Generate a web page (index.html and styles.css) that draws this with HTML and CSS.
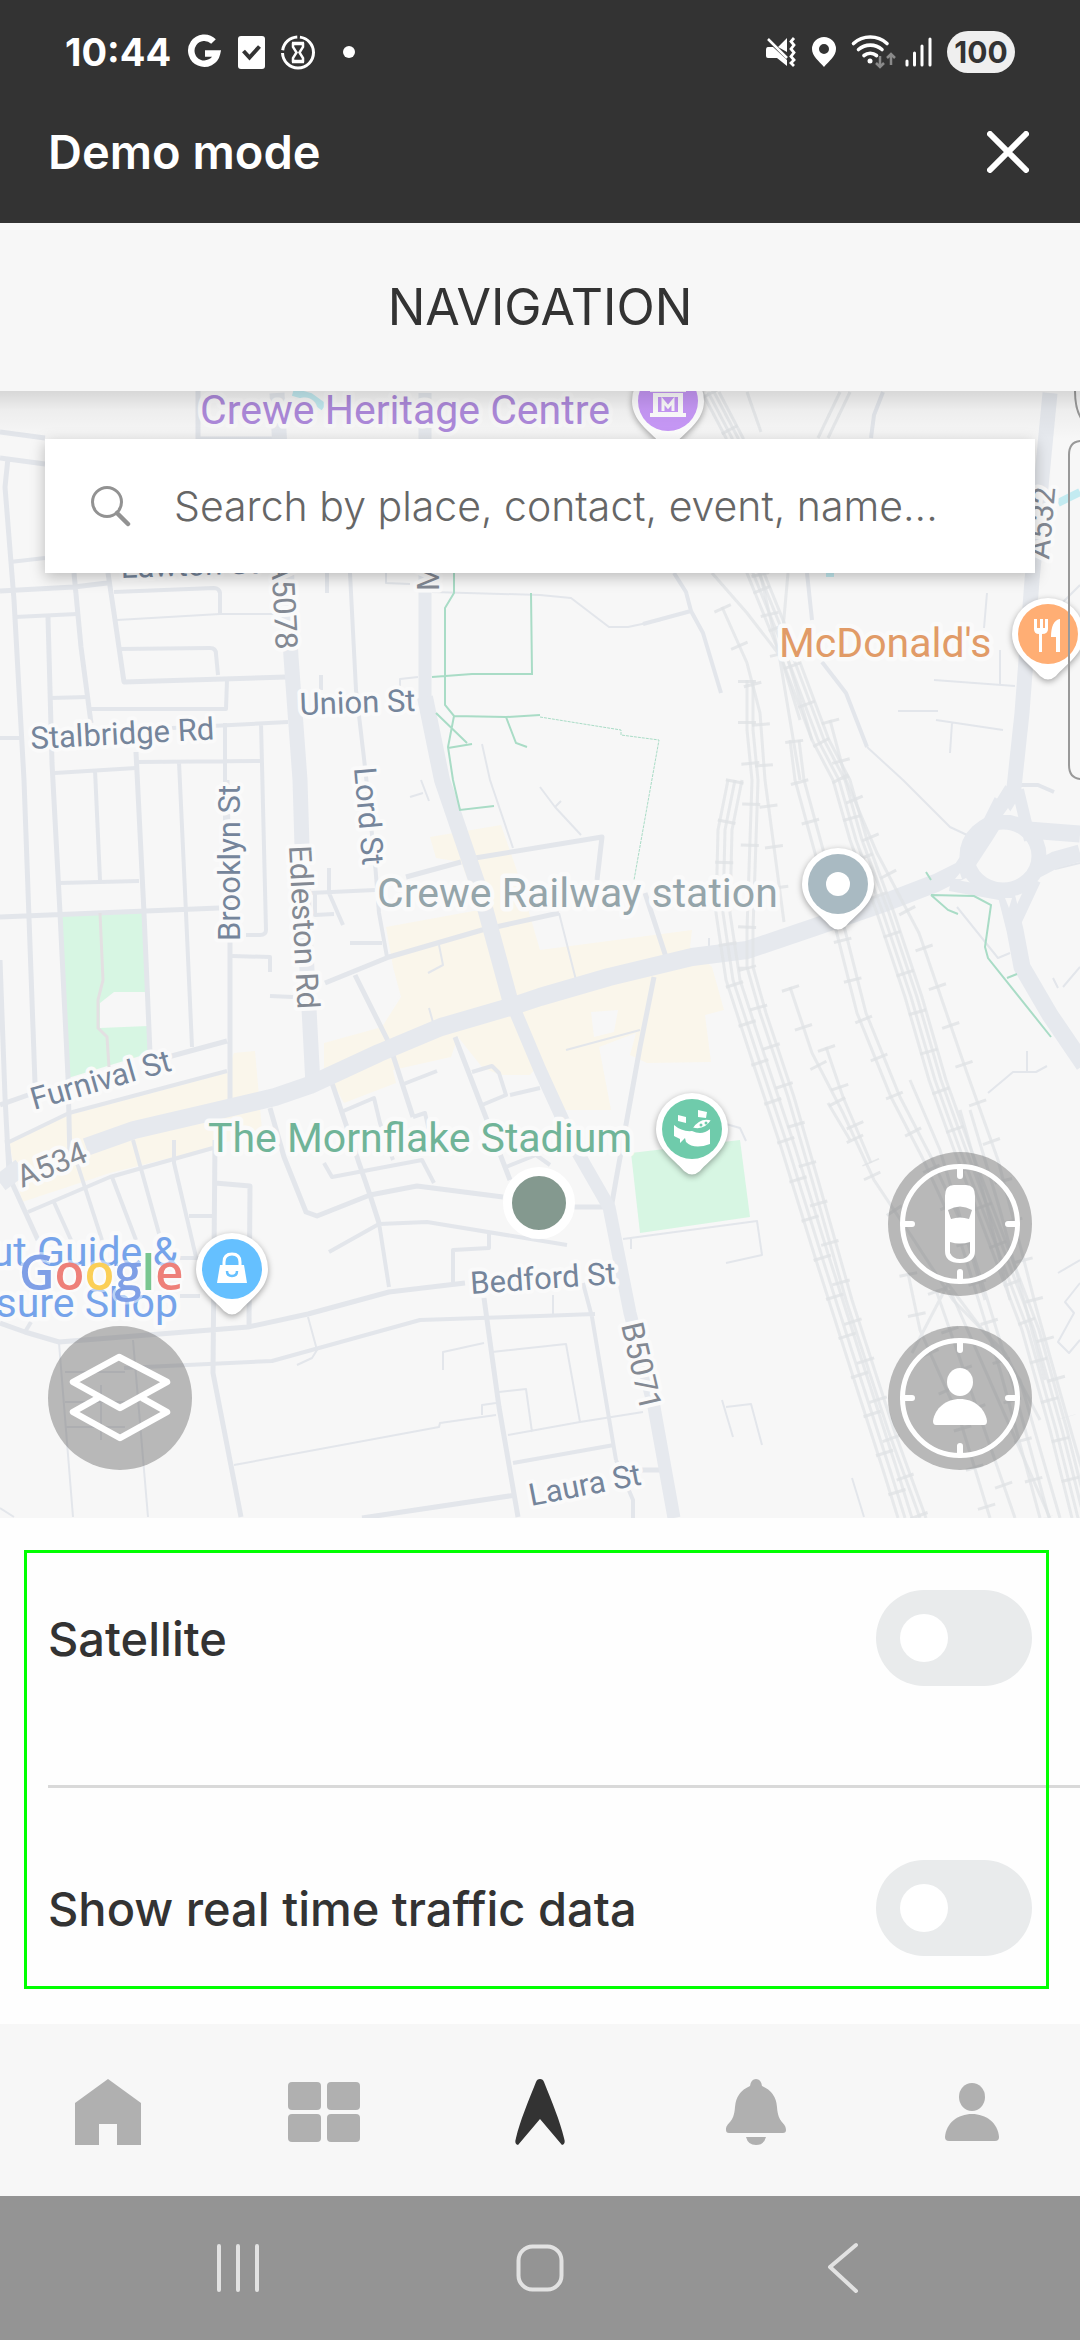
FILE: index.html
```html
<!DOCTYPE html>
<html lang="en">
<head>
<meta charset="utf-8">
<meta name="viewport" content="width=device-width, initial-scale=1">
<title>Navigation</title>
<link rel="stylesheet" href="styles.css">
</head>
<body>
<header class="top">
  <div class="status">
    <time class="clock">10:44</time>
    <svg class="status-left" viewBox="188 30 170 44" aria-hidden="true">
      <path d="M213.500 41.500A13 13 0 1 0 217 53.500H205" fill="none" stroke="#fff" stroke-width="6.500"/>
      <rect x="238" y="36" width="27" height="33" rx="3" fill="#fff"/>
      <path d="M243.500 51l6 6.500 10-11" fill="none" stroke="#333" stroke-width="4"/>
      <circle cx="298" cy="52.500" r="15.500" fill="none" stroke="#fff" stroke-width="3" stroke-dasharray="70 3 21 3.400" stroke-dashoffset="-2" transform="rotate(-90 298 52.500)"/>
      <path d="M293 44h10v3l-3.500 5.500 3.500 5.500v3h-10v-3l3.500-5.500-3.500-5.500z" fill="none" stroke="#fff" stroke-width="2.500"/>
      <path d="M292 43h12M292 62h12" stroke="#fff" stroke-width="2.500"/>
      <circle cx="349" cy="52" r="6" fill="#fff"/>
    </svg>
    <svg class="status-right" viewBox="764 30 170 44" aria-hidden="true">
      <path d="M778 47l9-9v14zM768 47h5l14 13v6l-10-8h-9q-2 0-2-2v-6q0-3 2-3z" fill="#fff"/>
      <path d="M768 39l19 19" stroke="#fff" stroke-width="2.500"/>
      <path d="M794 38l-3 3.500 3 3.500-3 4 3 3.500-3 4 3 3.500-3 3 3 3" fill="none" stroke="#fff" stroke-width="2.800"/>
      <path d="M824 37a12 12 0 0 0-12 12c0 7 7 12 12 18 5-6 12-11 12-18a12 12 0 0 0-12-12zm0 7a5 5 0 1 1 0 10 5 5 0 0 1 0-10z" fill="#fff"/>
      <g fill="none" stroke="#fff" stroke-width="3.600" stroke-linecap="round">
        <path d="M853.500 43.500a25 25 0 0 1 33.500 0M858.500 49.500a18 18 0 0 1 23.500 0M864 55.500a10 10 0 0 1 12.500 0"/>
        <path d="M907 61v4M914.500 53v12M922 46v19M930 39v26" stroke-width="3"/>
      </g>
      <circle cx="870" cy="61" r="2.500" fill="#fff"/>
      <path d="M880 56v11m-4-4l4 4 4-4M891 65V54m-4 4l4-4 4 4" fill="none" stroke="#8a8a8a" stroke-width="2.500"/>
    </svg>
    <span class="battery">100</span>
  </div>
  <div class="demo">
    <span class="demo-title">Demo mode</span>
    <button class="close" type="button" aria-label="Close">
      <svg viewBox="0 0 42 42"><path d="M3 3l36 36M39 3L3 39" fill="none" stroke="#fff" stroke-width="6" stroke-linecap="round"/></svg>
    </button>
  </div>
</header>

<h1 class="page-title">NAVIGATION</h1>

<main class="map">
  <svg class="map-canvas" viewBox="0 391 1080 1127" preserveAspectRatio="xMidYMid slice" role="img" aria-label="Map of Crewe">
    <g class="commercial">
      <path d="M9 1143L69 1115 227 1073 234 1053 255 1051 262 1130 210 1148 110 1173 22 1202z"/>
      <path d="M324 1070V1043L382 1027 401 997 393 967 386 927 479 910 461 862 436 858 430 837 501 825 516 868 540 950 692 930 690 947 712 967 724 1010 705 1015 711 1062 647 1063 630 1055 636 1033 599 1047 611 1110 561 1110 540 1063 530 1075 500 1075 482 1067 458 1037 451 1057 393 1070 396 1083 344 1103 331 1080z"/>
    </g>
    <g fill="#f7f7f7"><path d="M591 1012l27-2-4 22-20 5zM358 978l28-12 14 30-20 30z"/></g>
    <path class="park" d="M59 916l84-4 3 80h-32l-14 11v25l48-2 2 27-82 25z"/>
    <path class="park" d="M631 1153l109-13 10 77-110 16z"/>
    <path d="M293 392l17 5 14 10M1058 503l22-11M826 573l8 0" fill="none" stroke="#c3ebf1" stroke-width="8"/>

    <g class="minor">
      <path class="w6" d="M0 432l45 6M0 458l45 6M8 458L5 487 14 600 24 780 35 1083M0 591L74 587 107 583M74 573L81 647 91 723M108 573L114 613 124 682 286 677M198 391v48h80M48 617L52 763 60 913 68 1077 70 1160M0 917L219 908M136 752L144 913 150 1053M227 780L230 943V1100M0 960L5 1097 9 1173M0 1105L28 1095M168 1057L227 1041"/>
      <path class="w4" d="M10 562l35-4M114 592L214 588Q219 588 220 593V615M119 649L210 648Q216 648 216 654L218 675M15 617L77 614M50 698L88 697M91 709H226L227 680M0 738H21M172 728L288 722M55 773L136 768M136 762L260 761M225 723V780 908M261 723L266 930Q266 935 260 935H246M179 762L186 913 192 1047M95 770L100 880M59 883L139 881M9 1142L69 1113 227 1071M327 573V593M321 675V690M232 956L270 957V972M270 996L293 997"/>
      <path class="w2" d="M117 620L220 614H275M386 573V583L410 584M400 690V679L418 677M432 592L540 595 571 598 609 627H628L661 620M482 744L490 780 513 848M410 797l13-4M421 780l8 21"/>
      <path class="w4" d="M350 573L356 690 365 767 375 863 379 913 387 957M310 893L375 890M315 893V915L334 914M329 868V893L343 925M350 943H382M643 624L691 611 703 633 721 693M691 611L686 592 674 573"/>
      <path class="w6" d="M325 983L389 957 482 930 559 913M406 877L461 862M475 858L602 837 597 880M355 975L389 1043 413 1117M645 893L666 957M654 977L640 1047 616 1180 612 1203 605 1208M270 1108L284 1157 306 1212 317 1216 370 1195 417 1186 503 1197M331 1080L358 1160 370 1195M455 1037L510 1180"/>
      <path class="w2" d="M540 787L555 807 581 835M555 807l6-6M559 913L576 980M566 1050L640 1030M709 938v15M439 945l4 20-15 8M429 1008l5 18"/>
      <path class="w4" d="M472 1072L492 1066 499 1073 506 1095 482 1105M510 1095L540 1088M401 1085L437 1071M341 1112L374 1098 380 1123 393 1160M324 1163L332 1177 422 1160 434 1183M506 1167l30-12 14 10M413 1117l12-4 9 40"/>
      <path class="w6" d="M7 1140L12 1183 38 1240M215 1140L213 1373 241 1517M215 1183L250 1186 249 1327M0 1323L25 1332 59 1342 248 1327 308 1314 389 1292 465 1283M574 1207H604M484 1298L499 1407 518 1517M362 1518L516 1495M370 1195L379 1223M640 1470h25"/>
      <path class="w4" d="M28 1212L110 1177 213 1148M53 1200L71 1240M77 1163L102 1240M112 1177L136 1240M133 1140L160 1237M174 1140V1163L196 1257M189 1216H212M124 1368L272 1361 420 1320 540 1316 595 1314M329 1252L379 1224 427 1222 567 1245M489 1232V1248L453 1250V1282M583 1283L592 1317 616 1460M379 1223L389 1287M513 1463L614 1445M180 1258h20M180 1296h20M25 1332l6-10M616 1460l17 40v18"/>
      <path class="w2" d="M234 1465L439 1427 440 1423 496 1415M308 1317L317 1350 312 1358 297 1365M443 1370V1352L484 1343M492 1352L566 1344 580 1422M59 1343L73 1517M133 1340L148 1517M0 1508L14 1517M499 1392L526 1389 532 1432M508 1435L580 1422 643 1412M482 1415v-10l14-2M553 1295v20M623 1239L757 1221 762 1255 726 1263M631 1239v10M726 1124l14 4 6 13M65 1372h60M65 1402h60M65 1427h60M101 1385v55"/>
      <path class="w4" d="M883 392L874 415 871 438M807 573L812 620M822 662L846 693 867 747M1020 785h18l16 7"/>
      <path class="w2" d="M867 747L903 780 950 827 967 835M934 680L1015 686M1000 650V684M987 593L984 628M898 711H938M936 720L1003 730M952 723L950 753M988 1093L1013 1072H1036L1047 1066M1027 1051V1072M957 907L998 958 1010 953M1080 967l-17 20M1053 978l5 10M722 1400L733 1437M726 1407L751 1404 762 1445M852 1478L864 1517M1058 1273L1080 1260M1080 1283L1065 1302 1074 1313 1058 1342 1069 1353 1080 1340M1055 610l25-25M1055 869l25-6"/>
    </g>

    <g class="major">
      <path d="M277 393L291 657 300 780 304 913 313 1085M1050 393L1032 580 1022 713 1013 797" stroke-width="15"/>
      <path d="M425 393V700L442 780 482 897 506 987 516 1013 540 1070 578 1153 609 1207 630 1313 654 1407 674 1518" stroke-width="13"/>
      <path d="M425 697L442 780 482 897 512 1007" stroke-width="16"/>
      <path d="M0 1183L21 1167M86 1147L134 1130 207 1113 275 1097 310 1085 379 1053 441 1027 510 1007 540 997 609 977 692 957 747 950 815 927 884 903 936 883 962 870 985 835 1013 790" stroke-width="18"/>
      <ellipse cx="1003" cy="856" rx="36" ry="34" stroke-width="15"/>
      <path d="M1028 830L1080 834M1036 870L1055 860 1080 853M1005 890L1015 930 1022 967 1050 1015 1084 1065" stroke-width="17"/>
      <path d="M950 885L1000 894M1018 790L1030 840M975 850L1000 800M1035 880L1014 925" stroke-width="12"/>
    </g>
    <path d="M1003 815l5-7 5 7zM1046 842l17 0-12 6zM955 879l5-6 2 6zM1005 898h7l-3 10z" fill="#f7f7f7"/>

    <g class="trail">
      <path d="M454 573V593L445 608V705L454 716 506 717 540 715M432 677L472 674H532L531 593M506 717L516 743 527 747M436 713L467 743M448 748L472 744M454 716L448 747 453 780 460 810 494 806"/>
      <path d="M926 872L931 880M931 895L974 896 991 905 985 947 988 958 1051 1037M931 895L948 910 958 914M1007 978L1017 974"/>
      <path class="dotted" d="M540 717L621 730V735L659 740 634 880"/>
    </g>
    <path d="M100 913L103 980 98 1000V1028L107 1037 109 1067" fill="none" stroke="#e3e0e2" stroke-width="3"/>

    <g id="rails">
      <path id="rail-a" d="M702 392L726 438 747 573 781 657 812 740 833 780 850 840 877 913 905 997 929 1080 953 1147 988 1240 1022 1330 1050 1430 1072 1518"/>
      <use href="#rail-a" x="6"/><use href="#rail-a" x="12"/><use href="#rail-a" x="17"/>
      <path d="M712 573L747 613 781 657 800 720M788 573L782 640 812 740M760 573L780 660 800 780M722 607L747 663 760 713 765 780 784 922M747 392l14 40M840 392l-22 46M850 392l-22 46"/>
      <path id="rail-b" d="M728 780L718 830 716 913 726 980 753 1063 781 1147 815 1257 850 1367 884 1473 898 1518"/>
      <use href="#rail-b" x="7"/><use href="#rail-b" x="14"/>
      <path id="rail-c" d="M747 680V730L752 780 747 930V967L760 1013 788 1097 812 1180 846 1300 888 1430 920 1518"/>
      <use href="#rail-c" x="6"/>
      <path id="rail-e" d="M790 740L795 780 836 930 857 1013 891 1097 922 1157 960 1240 1000 1370 1040 1518"/>
      <use href="#rail-e" x="9"/>
      <path d="M830 720L846 780 877 853 919 933 967 1073 998 1160 1036 1307 1067 1417 1085 1480"/>
      <path d="M790 987L812 1053 843 1113 874 1180 912 1237 953 1300 1005 1353 1040 1420M826 1047L843 1097 871 1163M828 1103L850 1140"/>
      <path d="M908 1273L920 1330 960 1420 990 1518M912 1353L950 1280M936 1290L988 1440 1015 1518M950 1290L1050 1518M945 1280L1020 1380 1060 1518M910 1080L940 1150 985 1300M960 1110L980 1180 1010 1300M970 1110L1000 1210 1045 1380"/>
    </g>
    <g class="sleepers">
      <use href="#rail-a" x="8"/><use href="#rail-b" x="7"/><use href="#rail-c"/><use href="#rail-e" x="4"/>
      <path d="M760 573L780 660M722 607L747 663 760 713 765 780 784 922M830 720L846 780 877 853 919 933 967 1073 998 1160 1036 1307 1067 1417M790 987L812 1053 843 1113 874 1180 912 1237M826 1047L843 1097 871 1163M936 1290L988 1440 1015 1518M908 1273L920 1330 960 1420 990 1518"/>
    </g>

    <g class="street">
      <text x="121" y="578" transform="rotate(-2 121 578)">Lawton St</text>
      <text x="31" y="749" transform="rotate(-3 31 749)">Stalbridge Rd</text>
      <text x="300" y="715" transform="rotate(-2 300 715)">Union St</text>
      <text x="240" y="941" transform="rotate(-90 240 941)">Brooklyn St</text>
      <text x="354" y="768" transform="rotate(85 354 768)">Lord St</text>
      <text x="34" y="1110" transform="rotate(-16 34 1110)">Furnival St</text>
      <text x="471" y="1294" transform="rotate(-4 471 1294)">Bedford St</text>
      <text x="531" y="1506" transform="rotate(-11 531 1506)">Laura St</text>
    </g>
    <g class="street route">
      <text x="276" y="650" text-anchor="end" transform="rotate(87 276 650)">A5078</text>
      <text x="439" y="591" transform="rotate(-90 439 591)">M</text>
      <text x="1049" y="560" transform="rotate(-85 1049 560)">A532</text>
      <text x="289" y="846" transform="rotate(87 289 846)">Edleston Rd</text>
      <text x="22" y="1188" transform="rotate(-22 22 1188)">A534</text>
      <text x="621" y="1325" transform="rotate(77 621 1325)">B5071</text>
    </g>
    <g class="place">
      <text x="200" y="424" fill="#ae8adc">Crewe Heritage Centre</text>
      <text x="779" y="657" fill="#e19b67">McDonald's</text>
      <text x="377" y="907" fill="#95a5aa">Crewe Railway station</text>
      <text x="208" y="1152" fill="#70b498">The Mornflake Stadium</text>
      <text x="178" y="1266" text-anchor="end" fill="#75a3ea">ut Guide &amp;</text>
      <text x="178" y="1317" text-anchor="end" fill="#75a3ea">sure Shop</text>
    </g>
    <text class="google" x="19" y="1290"><tspan fill="#7f9fe6">G</tspan><tspan fill="#ee8079">o</tspan><tspan fill="#fbcf57">o</tspan><tspan fill="#7f9fe6">g</tspan><tspan fill="#79c690">l</tspan><tspan fill="#ee8079">e</tspan></text>

    <defs>
      <path id="pin" d="M0-36A36 36 0 0 0-36 0C-36 20-18 30-8 42Q0 49 8 42C18 30 36 20 36 0A36 36 0 0 0 0-36z"/>
    </defs>
    <g transform="translate(668 401)">
      <use class="pin" href="#pin"/><circle r="30" fill="#c899f8"/>
      <path d="M-15-8h30v20h3v4h-36v-4h3zM-18-9v-4L0-22 18-13v4z" fill="#fff"/><path d="M-10-4h20v15h-20z" fill="#c899f8"/><path d="M-5 10v-10l5 6 5-6v10" fill="none" stroke="#fff" stroke-width="3"/>
    </g>
    <g transform="translate(1048 634)">
      <use class="pin" href="#pin"/><circle r="30" fill="#ffae74"/>
      <path d="M-14-15v10q0 5 5 5v18h3v-18q6 0 6-5v-10h-3v9h-2v-9h-3v9h-3v-9zM12-15c-6 1-9 7-9 18h5v15h4z" fill="#fff"/>
    </g>
    <g transform="translate(838 884)">
      <use class="pin" href="#pin"/><circle r="30" fill="#a9bac2"/><circle r="12" fill="#fff"/>
    </g>
    <g transform="translate(692 1129)">
      <use class="pin" href="#pin"/><circle r="30" fill="#6fcbab"/>
      <path d="M-18-4q8 7 18 6 10 5 18-2v15q-16 6-24-2l-1-4-5 5v-4l-6-3zM-14-14l8 2v6l-8-2zM6-19l9 2-1 6-8-1z" fill="#fff"/>
      <path d="M0-1q8-12 20-8-8 12-20 8z" fill="#fff" stroke="#6fcbab" stroke-width="1.500"/><circle cx="9" cy="-4" r="1.500" fill="#6fcbab"/><circle cx="14" cy="-6" r="1.500" fill="#6fcbab"/>
    </g>
    <g transform="translate(232 1269)">
      <use class="pin" href="#pin"/><circle r="30" fill="#65c0ff"/>
      <path d="M-12-4h24l3 18h-30z" fill="#fff"/><path d="M-8-3v-4q0-8 8-8t8 8v4" fill="none" stroke="#fff" stroke-width="3"/><path d="M-5 2q0 5 5 5t5-5" fill="none" stroke="#65c0ff" stroke-width="2.500"/>
    </g>
    <circle cx="539" cy="1203" r="31.500" fill="#84998f" stroke="#fff" stroke-width="9"/>
    <path d="M1090 441h-8q-13 0-13 14v310q0 14 13 14h8M1075 391q0 20 8 30" fill="none" stroke="#999" stroke-width="2"/>
  </svg>

  <div class="map-shade"></div>

  <form class="search">
    <svg viewBox="0 0 42 42" aria-hidden="true"><circle cx="17" cy="17" r="14.500" fill="none" stroke="#929292" stroke-width="3"/><path d="M27 28l11 11" stroke="#929292" stroke-width="4.500" stroke-linecap="round"/></svg>
    <input type="text" placeholder="Search by place, contact, event, name..." aria-label="Search">
  </form>

  <div class="controls">
    <button class="round" type="button" aria-label="Map layers">
      <svg viewBox="0 0 144 144"><path d="M71 31L25 56 72 82 119 56zM50 72L25 86 72 112 119 86 94 72" fill="none" stroke="#fff" stroke-width="6.500" stroke-linejoin="round"/></svg>
    </button>
    <div class="locate">
      <button class="round" type="button" aria-label="Locate vehicle">
        <svg viewBox="0 0 144 144"><circle cx="72" cy="72" r="57.500" fill="none" stroke="#fff" stroke-width="5"/><path d="M72 15v9M72 129v-9M15 72h9M129 72h-9" stroke="#fff" stroke-width="6" stroke-linecap="round"/>
        <path fill-rule="evenodd" d="M57 44q0-11 9-11h12q9 0 9 11v55q0 12-15 12t-15-12zM60 58l3 9q9-3 18 0l3-9q-12-7-24 0zM62 90v11q3 6 10 6t10-6V90q-10 3-20 0z" fill="#fff"/></svg>
      </button>
      <button class="round" type="button" aria-label="Locate me">
        <svg viewBox="0 0 144 144"><circle cx="72" cy="72" r="57.500" fill="none" stroke="#fff" stroke-width="5"/><path d="M72 15v9M72 129v-9M15 72h9M129 72h-9" stroke="#fff" stroke-width="6" stroke-linecap="round"/>
        <ellipse cx="72" cy="56" rx="13" ry="14" fill="#fff"/><path d="M45 95C47 82 58 73 72 73s25 9 27 22q0 4-3 4H48q-3 0-3-4z" fill="#fff"/></svg>
      </button>
    </div>
  </div>
</main>

<section class="settings">
  <div class="row">
    <label for="satellite">Satellite</label>
    <input class="toggle" id="satellite" type="checkbox">
  </div>
  <hr class="divider">
  <div class="row">
    <label for="traffic">Show real time traffic data</label>
    <input class="toggle" id="traffic" type="checkbox">
  </div>
  <div class="highlight"></div>
</section>

<nav class="tabs">
  <a href="#home" aria-label="Home"><svg viewBox="0 0 72 72"><path d="M36 3l33 24v42H45V48H27v21H3V27z"/></svg></a>
  <a href="#services" aria-label="Services"><svg viewBox="0 0 72 72"><rect y="6" width="33" height="28" rx="4"/><rect x="39" y="6" width="33" height="28" rx="4"/><rect y="38" width="33" height="28" rx="4"/><rect x="39" y="38" width="33" height="28" rx="4"/></svg></a>
  <a class="active" href="#navigation" aria-label="Navigation"><svg viewBox="0 0 72 72"><path d="M36 3q3 0 4 3c8 20 16 39 20 56q2 6-2 7L36 43 14 69q-4-1-2-7C16 45 24 26 32 6q1-3 4-3z"/></svg></a>
  <a href="#alerts" aria-label="Notifications"><svg viewBox="0 0 72 72"><path d="M36 3q5 0 6 7 14 6 15 21c1 17 9 15 9 23q0 3-3 3H9q-3 0-3-3c0-8 8-6 9-23q1-15 15-21 1-7 6-7zM26 61h20q-2 8-10 8t-10-8z"/></svg></a>
  <a href="#profile" aria-label="Profile"><svg viewBox="0 0 72 72"><ellipse cx="36" cy="21" rx="13" ry="14"/><path d="M9 61C10 47 22 38 36 38s26 9 27 23q0 4-4 4H13q-4 0-4-4z"/></svg></a>
</nav>

<footer class="system">
  <button type="button" aria-label="Recent apps"><svg viewBox="0 0 54 54"><path d="M8 5v44M27 5v44M46 5v44"/></svg></button>
  <button type="button" aria-label="Home screen"><svg viewBox="0 0 54 54"><rect x="5.500" y="5.500" width="43" height="43" rx="14"/></svg></button>
  <button type="button" aria-label="Back"><svg viewBox="0 0 54 54"><path d="M41 4L15 26 41 50"/></svg></button>
</footer>
</body>
</html>
```

FILE: styles.css
```css
* { box-sizing: border-box; }

body {
  margin: 0;
  min-height: 100vh;
  display: flex;
  flex-direction: column;
  background: #fefefe;
  color: #333;
  font-family: Inter, "Open Sans", sans-serif;
  font-size: 47px;
}

button {
  padding: 0;
  border: 0;
  background: none;
}

svg { display: block; }

/* Status bar and demo banner */
.top {
  background: #333;
  color: #fff;
}

.status {
  display: flex;
  align-items: center;
  height: 104px;
  padding: 0 65px;
}

.clock {
  width: 123px;
  font-size: 38px;
  font-weight: 700;
}

.status-left,
.status-right {
  width: 170px;
  height: 44px;
}

.status-right { margin-left: auto; }

.battery {
  width: 68px;
  margin-left: 13px;
  border-radius: 21px;
  background: #efefef;
  color: #333;
  font-size: 30px;
  font-weight: 700;
  line-height: 42px;
  text-align: center;
}

.demo {
  display: flex;
  align-items: center;
  justify-content: space-between;
  height: 119px;
  padding: 0 51px 24px 48px;
  font-weight: 600;
}

.close svg {
  width: 42px;
  height: 42px;
}

.page-title {
  margin: 0;
  background: #f7f7f7;
  font-size: 50px;
  font-weight: 400;
  line-height: 168px;
  text-align: center;
}

/* Map */
.map {
  position: relative;
  flex: 1;
  display: flex;
  flex-direction: column;
  justify-content: space-between;
  min-height: 700px;
  padding: 48px 45px;
  overflow: hidden;
  background: #f7f7f7;
}

.map-canvas,
.map-shade {
  position: absolute;
  inset: 0;
  width: 100%;
  height: 100%;
}

.map-shade {
  height: 48px;
  background: linear-gradient(rgba(0, 0, 0, .13), rgba(0, 0, 0, .04) 40%, rgba(0, 0, 0, 0));
}

.commercial { fill: #faf6eb; }
.park { fill: #d7f6e3; }
.minor { fill: none; stroke: #e3e6eb; stroke-linejoin: round; }
.w6 { stroke-width: 5px; }
.w4 { stroke-width: 4px; }
.w2 { stroke-width: 2px; }
.major { fill: none; stroke: #e6e9ee; stroke-linejoin: round; }
.trail { fill: none; stroke: #a9dcc6; stroke-width: 2px; }
.dotted { stroke-dasharray: 3 1; stroke-width: 1px; }
#rails { fill: none; stroke: #e0e2e5; stroke-opacity: .7; stroke-width: 3px; }
.sleepers { fill: none; stroke: #e0e2e5; stroke-opacity: .8; stroke-width: 18px; stroke-dasharray: 3 38; }

.street,
.place {
  font-family: Roboto, sans-serif;
  stroke: #fafafa;
  stroke-linejoin: round;
  paint-order: stroke;
}

.street {
  fill: #75859b;
  font-size: 31px;
  stroke-width: 8px;
}

.route { fill: #838993; }

.place {
  font-size: 41px;
  stroke-width: 9px;
}

.google {
  font-family: "Open Sans", sans-serif;
  font-size: 49px;
  font-weight: 600;
  stroke: #fff;
  stroke-opacity: .5;
  stroke-width: 5px;
  paint-order: stroke;
}

.pin {
  fill: #fff;
  filter: drop-shadow(0 2px 3px rgba(0, 0, 0, .35));
}

.search {
  position: relative;
  display: flex;
  align-items: center;
  gap: 42px;
  height: 134px;
  padding: 0 45px;
  background: #fff;
  box-shadow: 0 4px 14px rgba(0, 0, 0, .25);
}

.search svg {
  flex: none;
  width: 42px;
  height: 42px;
}

.search input {
  flex: 1;
  min-width: 0;
  padding: 0;
  border: 0;
  outline: 0;
  background: none;
  color: #333;
  font: 300 41px Inter, "Open Sans", sans-serif;
}

.search input::placeholder {
  color: #666;
  opacity: 1;
}

.controls {
  position: relative;
  display: flex;
  align-items: flex-end;
  justify-content: space-between;
  padding: 0 3px;
}

.locate {
  display: grid;
  gap: 30px;
}

.round {
  width: 144px;
  height: 144px;
  border-radius: 50%;
  background: rgba(110, 110, 110, .46);
}

/* Map options */
.settings {
  position: relative;
  font-weight: 500;
}

.row {
  display: flex;
  align-items: center;
  justify-content: space-between;
  padding: 72px 48px 68px;
}

.divider {
  height: 3px;
  margin: 31px 0 0 48px;
  border: 0;
  background: #d9d9d9;
}

.toggle {
  appearance: none;
  width: 156px;
  height: 96px;
  margin: 0;
  padding: 24px;
  border-radius: 48px;
  background: #e9ebec;
}

.toggle::before {
  content: "";
  display: block;
  width: 48px;
  height: 48px;
  border-radius: 50%;
  background: #fff;
}

.toggle:checked { background: #333; }
.toggle:checked::before { margin-left: auto; }

.highlight {
  position: absolute;
  inset: 32px 31px 35px 24px;
  border: 3px solid #0f0;
  pointer-events: none;
}

/* Bottom tabs */
.tabs {
  display: grid;
  grid-template-columns: repeat(5, 1fr);
  padding: 52px 0 48px;
  background: #f7f7f7;
}

.tabs a {
  display: flex;
  justify-content: center;
  fill: #b0b0b0;
}

.tabs .active { fill: #333; }

.tabs svg {
  width: 72px;
  height: 72px;
}

/* Android navigation */
.system {
  display: grid;
  grid-template-columns: repeat(3, 28%);
  justify-content: center;
  padding: 45px 0;
  background: #949494;
}

.system button {
  display: flex;
  justify-content: center;
}

.system svg {
  width: 54px;
  height: 54px;
  fill: none;
  stroke: #e2e2e2;
  stroke-width: 4px;
  stroke-linecap: round;
  stroke-linejoin: round;
}
```
